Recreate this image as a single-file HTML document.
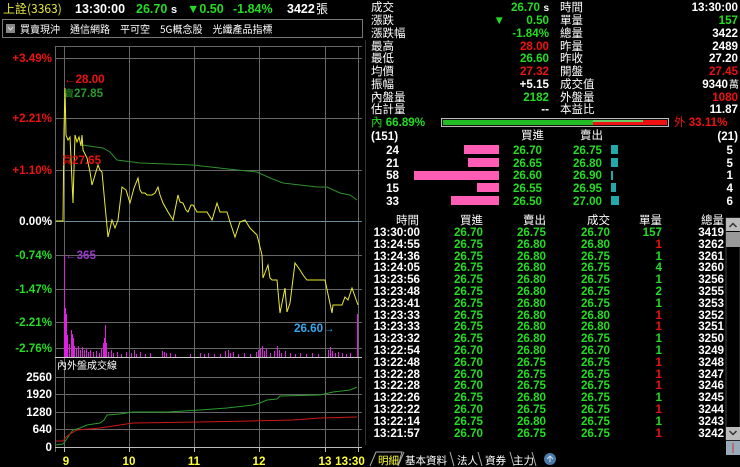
<!DOCTYPE html>
<html><head><meta charset="utf-8"><style>
html,body{margin:0;padding:0;background:#000;width:740px;height:467px;overflow:hidden}
svg{display:block}
text{font-family:"Liberation Sans","Noto Sans CJK TC",sans-serif;font-size:11.6px;font-weight:bold}
.c{font-family:"Noto Sans CJK TC","WenQuanYi Zen Hei",sans-serif;font-weight:normal;font-size:11.5px}
.w{fill:#fff}.g{fill:#22dd22}.r{fill:#ee1111}.y{fill:#ffff33}
</style></head><body>
<svg width="740" height="467" viewBox="0 0 740 467" xmlns="http://www.w3.org/2000/svg">
<text x="3" y="13" class="c" style="fill:#e8e840;font-size:12px">上詮(3363)</text>
<text x="75" y="13" class="w" style="font-size:12.5px">13:30:00</text>
<text x="136" y="13" class="g" style="font-size:12.5px">26.70</text><text x="171" y="13" class="w" style="font-size:11px">s</text>
<text x="187" y="13" class="g" style="font-size:12.5px">▼0.50</text>
<text x="233" y="13" class="g" style="font-size:12.5px">-1.84%</text>
<text x="287" y="13" class="w" style="font-size:12.5px">3422</text><text x="316" y="13" class="c w" style="font-size:12px">張</text>
<rect x="2.5" y="19.5" width="360" height="18" fill="none" stroke="#777"/>
<rect x="6" y="24" width="9" height="9" fill="#888"/><path d="M8 27 L10.5 30 L13 27" stroke="#ddd" fill="none"/>
<text x="20" y="33" class="c w" style="font-size:10px">買賣現沖　通信網路　平可空　5G概念股　光纖產品指標</text>

<g stroke="#666" stroke-width="1" fill="none">
<path d="M55.5 47 V452 M55 46.5 H362"/>
<path d="M64.5 47V452 M129.5 47V452 M194.5 47V452 M259.5 47V452 M325.5 47V452 M358.5 47V452"/>
<path d="M55 58.5H362 M55 118.5H362 M55 170.5H362 M55 255.5H362 M55 289.5H362 M55 322.5H362 M55 348.5H362"/>
<path d="M55 377.5H362 M55 394.5H362 M55 412.5H362 M55 429.5H362"/>
</g>
<path d="M55 221.5H362" stroke="#6a8a9a"/>
<path d="M55 357.5H362" stroke="#ccc"/>
<path d="M55 447.5H362" stroke="#bbb"/>
<g stroke="#bbb"><path d="M64.5 447V452 M129.5 447V452 M194.5 447V452 M259.5 447V452 M325.5 447V452 M358.5 447V452"/></g>
<g text-anchor="end">
<text x="52" y="62" class="r">+3.49%</text>
<text x="52" y="122" class="r">+2.21%</text>
<text x="52" y="174" class="r">+1.10%</text>
<text x="52" y="225" class="w">0.00%</text>
<text x="52" y="259" class="g">-0.74%</text>
<text x="52" y="293" class="g">-1.47%</text>
<text x="52" y="326" class="g">-2.21%</text>
<text x="52" y="352" class="g">-2.76%</text>
<text x="52" y="381" class="w">2560</text>
<text x="52" y="398" class="w">1920</text>
<text x="52" y="416" class="w">1280</text>
<text x="52" y="433" class="w">640</text>
<text x="52" y="451" class="w">0</text>
</g>
<g class="y" text-anchor="middle"><text x="66" y="465" class="y">9</text><text x="129" y="465" class="y">10</text><text x="194" y="465" class="y">11</text><text x="259" y="465" class="y">12</text><text x="325" y="465" class="y">13</text><text x="350" y="465" class="y">13:30</text></g>
<text x="57" y="369" class="c w" style="font-size:10px">內外盤成交線</text>

<path stroke="#e020e0" stroke-width="1" d="M64.5 357V255 M65.5 357V308 M66.5 357V314 M67.5 357V335 M69.5 357V344 M71.5 357V330 M72.5 357V334 M73.5 357V338 M74.5 357V346 M76.5 357V348 M78.5 357V346 M80.5 357V350 M82.5 357V347 M84.5 357V350 M86.5 357V349 M88.5 357V352 M90.5 357V350 M93.5 357V352 M96.5 357V351 M99.5 357V353 M101.5 357V349 M103.5 357V343 M104.5 357V338 M105.5 357V325 M106.5 357V343 M108.5 357V352 M111.5 357V350 M113.5 357V353 M117.5 357V352 M121.5 357V354 M126.5 357V352 M131.5 357V353 M134.5 357V350 M136.5 357V354 M140.5 357V352 M145.5 357V354 M150.5 357V353 M162.5 357V351 M164.5 357V352 M166.5 357V353 M170.5 357V353 M175.5 357V354 M190.5 357V354 M200.5 357V353 M204.5 357V354 M208.5 357V353 M214.5 357V354 M220.5 357V354 M225.5 357V351 M228.5 357V350 M230.5 357V353 M233.5 357V352 M238.5 357V354 M244.5 357V353 M250.5 357V354 M256.5 357V352 M258.5 357V350 M260.5 357V348 M262.5 357V346 M264.5 357V351 M266.5 357V349 M270.5 357V353 M274.5 357V351 M277.5 357V346 M279.5 357V350 M281.5 357V353 M285.5 357V351 M290.5 357V353 M295.5 357V354 M300.5 357V353 M306.5 357V354 M312.5 357V353 M318.5 357V354 M328.5 357V350 M330.5 357V347 M332.5 357V351 M335.5 357V353 M338.5 357V352 M342.5 357V353 M346.5 357V354 M350.5 357V353 M357.5 357V314"/>

<polyline fill="none" stroke="#2f8f2f" stroke-width="1" points="82,145 103,148 110,152 117,160 140,163 193,165 237,170 257,172 270,178 283,183 300,185 317,187 327,187 340,193 350,195 357,200"/>
<polyline fill="none" stroke="#ecec30" stroke-width="1" points="56,221 63,221 64,130 65,88 66,135 68,140 70,137 73,203 75,135 77,142 79,137 81,146 82,135 83,150 87,158 90,172 92,185 95,175 98,165 100,170 102,172 105,205 108,237 112,220 115,228 118,220 122,187 126,190 130,203 134,188 138,178 140,190 142,193 145,193 147,195 152,195 155,193 158,187 160,195 163,203 168,212 173,220 178,195 180,202 183,203 186,210 188,212 191,205 193,205 197,212 207,212 212,220 217,203 220,212 227,212 230,222 232,228 235,237 240,222 245,220 250,228 257,235 262,255 263,278 268,265 270,278 272,280 277,280 280,313 285,288 287,312 290,303 295,263 300,270 303,275 307,280 325,280 332,313 333,305 342,305 345,297 348,300 352,288 358,305"/>
<polyline fill="none" stroke="#2a9a2a" points="56,445 63,444 66,440 70,434 73,430 80,428 87,425 100,423 104,420 107,415 120,414 133,412 167,412 200,410 227,408 253,405 260,403 267,400 277,399 280,396 320,395 333,392 350,390 357,387"/>
<polyline fill="none" stroke="#d01818" points="56,441 63,441 66,437 70,434 77,430 100,428 120,425 133,423 200,422 250,421 293,420 320,418 357,417"/>

<text x="64" y="83" class="r">←28.00</text>
<text x="64" y="97" style="fill:#2a9a2a"><tspan class="c" style="font-size:10px">賣</tspan>27.85</text>
<text x="62" y="164" class="r"><tspan class="c" style="font-size:10px">買</tspan>27.65</text>
<text x="65" y="259" style="fill:#9a3acc">←365</text>
<text x="294" y="332" style="fill:#33aaee">26.60→</text>

<g class="c w">
<text x="371" y="11" class="c w">成交</text><text x="371" y="24" class="c w">漲跌</text><text x="371" y="37" class="c w">漲跌幅</text><text x="371" y="50" class="c w">最高</text><text x="371" y="62" class="c w">最低</text><text x="371" y="75" class="c w">均價</text><text x="371" y="88" class="c w">振幅</text><text x="371" y="101" class="c w">內盤量</text><text x="371" y="113" class="c w">估計量</text>
<text x="560" y="11" class="c w">時間</text><text x="560" y="24" class="c w">單量</text><text x="560" y="37" class="c w">總量</text><text x="560" y="50" class="c w">昨量</text><text x="560" y="62" class="c w">昨收</text><text x="560" y="75" class="c w">開盤</text><text x="560" y="88" class="c w">成交值</text><text x="560" y="101" class="c w">外盤量</text><text x="560" y="113" class="c w">本益比</text>
</g>
<g text-anchor="end">
<text x="540" y="11" class="g">26.70</text><text x="549" y="11" class="w" style="font-size:10px">s</text>
<text x="549" y="24" class="g">0.50</text><text x="505" y="24" class="g">▼</text>
<text x="549" y="37" class="g">-1.84%</text>
<text x="549" y="50" class="r">28.00</text>
<text x="549" y="62" class="g">26.60</text>
<text x="549" y="75" class="r">27.32</text>
<text x="549" y="88" class="w">+5.15</text>
<text x="549" y="101" class="g">2182</text>
<text x="549" y="113" class="w">--</text>
<text x="738" y="11" class="w">13:30:00</text>
<text x="738" y="24" class="g">157</text>
<text x="738" y="37" class="w">3422</text>
<text x="738" y="50" class="w">2489</text>
<text x="738" y="62" class="w">27.20</text>
<text x="738" y="75" class="r">27.45</text>
<text x="728" y="88" class="w">9340</text><text x="739" y="88" class="c w" style="font-size:10px">萬</text>
<text x="738" y="101" class="r">1080</text>
<text x="738" y="113" class="w">11.87</text>
</g>
<text x="371" y="126" class="g"><tspan class="c">內</tspan> 66.89%</text>
<rect x="441.5" y="118.5" width="227" height="8" fill="#111" stroke="#bbb"/>
<rect x="443" y="120" width="150" height="5" fill="#22bb22"/>
<rect x="593" y="120" width="74" height="5" fill="#ee1111"/>
<rect x="593" y="120" width="50" height="2" fill="#66cc66"/>
<text x="674" y="126" class="r"><tspan class="c">外</tspan> 33.11%</text>

<text x="371" y="140" class="w">(151)</text>
<text x="738" y="140" class="w" text-anchor="end">(21)</text>
<text x="521" y="139" class="c w">買進</text><text x="580" y="139" class="c w">賣出</text>
<g fill="#ff5cb5">
<rect x="464" y="145" width="35" height="9"/><rect x="468" y="158" width="31" height="9"/><rect x="414" y="171" width="85" height="9"/><rect x="477" y="183" width="22" height="9"/><rect x="451" y="196" width="48" height="9"/>
</g>
<g fill="#22aaaa">
<rect x="611" y="145" width="7" height="9"/><rect x="611" y="158" width="7" height="9"/><rect x="611" y="171" width="2" height="9"/><rect x="611" y="183" width="5" height="9"/><rect x="611" y="196" width="8" height="9"/>
</g>
<g text-anchor="end">
<text x="399" y="154" class="w">24</text><text x="399" y="167" class="w">21</text><text x="399" y="179" class="w">58</text><text x="399" y="192" class="w">15</text><text x="399" y="205" class="w">33</text>
<text x="542" y="154" class="g">26.70</text><text x="542" y="167" class="g">26.65</text><text x="542" y="179" class="g">26.60</text><text x="542" y="192" class="g">26.55</text><text x="542" y="205" class="g">26.50</text>
<text x="602" y="154" class="g">26.75</text><text x="602" y="167" class="g">26.80</text><text x="602" y="179" class="g">26.90</text><text x="602" y="192" class="g">26.95</text><text x="602" y="205" class="g">27.00</text>
<text x="733" y="154" class="w">5</text><text x="733" y="167" class="w">5</text><text x="733" y="179" class="w">1</text><text x="733" y="192" class="w">4</text><text x="733" y="205" class="w">6</text>
</g>

<g text-anchor="end">
<text x="419" y="224" class="c w">時間</text><text x="483" y="224" class="c w">買進</text><text x="546" y="224" class="c w">賣出</text><text x="610" y="224" class="c w">成交</text><text x="662" y="224" class="c w">單量</text><text x="724" y="224" class="c w">總量</text>
</g>
<g text-anchor="end">
<text x="420" y="236" class="w">13:30:00</text><text x="483" y="236" class="g">26.70</text><text x="546" y="236" class="g">26.75</text><text x="610" y="236" class="g">26.70</text><text x="662" y="236" class="g">157</text><text x="724" y="236" class="w">3419</text>
<text x="420" y="248" class="w">13:24:55</text><text x="483" y="248" class="g">26.75</text><text x="546" y="248" class="g">26.80</text><text x="610" y="248" class="g">26.80</text><text x="662" y="248" class="r">1</text><text x="724" y="248" class="w">3262</text>
<text x="420" y="260" class="w">13:24:36</text><text x="483" y="260" class="g">26.75</text><text x="546" y="260" class="g">26.80</text><text x="610" y="260" class="g">26.75</text><text x="662" y="260" class="g">1</text><text x="724" y="260" class="w">3261</text>
<text x="420" y="271" class="w">13:24:05</text><text x="483" y="271" class="g">26.75</text><text x="546" y="271" class="g">26.80</text><text x="610" y="271" class="g">26.75</text><text x="662" y="271" class="g">4</text><text x="724" y="271" class="w">3260</text>
<text x="420" y="283" class="w">13:23:56</text><text x="483" y="283" class="g">26.75</text><text x="546" y="283" class="g">26.80</text><text x="610" y="283" class="g">26.75</text><text x="662" y="283" class="g">1</text><text x="724" y="283" class="w">3256</text>
<text x="420" y="295" class="w">13:23:48</text><text x="483" y="295" class="g">26.75</text><text x="546" y="295" class="g">26.80</text><text x="610" y="295" class="g">26.75</text><text x="662" y="295" class="g">2</text><text x="724" y="295" class="w">3255</text>
<text x="420" y="307" class="w">13:23:41</text><text x="483" y="307" class="g">26.75</text><text x="546" y="307" class="g">26.80</text><text x="610" y="307" class="g">26.75</text><text x="662" y="307" class="g">1</text><text x="724" y="307" class="w">3253</text>
<text x="420" y="319" class="w">13:23:33</text><text x="483" y="319" class="g">26.75</text><text x="546" y="319" class="g">26.80</text><text x="610" y="319" class="g">26.80</text><text x="662" y="319" class="r">1</text><text x="724" y="319" class="w">3252</text>
<text x="420" y="330" class="w">13:23:33</text><text x="483" y="330" class="g">26.75</text><text x="546" y="330" class="g">26.80</text><text x="610" y="330" class="g">26.80</text><text x="662" y="330" class="r">1</text><text x="724" y="330" class="w">3251</text>
<text x="420" y="342" class="w">13:23:32</text><text x="483" y="342" class="g">26.75</text><text x="546" y="342" class="g">26.80</text><text x="610" y="342" class="g">26.75</text><text x="662" y="342" class="g">1</text><text x="724" y="342" class="w">3250</text>
<text x="420" y="354" class="w">13:22:54</text><text x="483" y="354" class="g">26.70</text><text x="546" y="354" class="g">26.80</text><text x="610" y="354" class="g">26.70</text><text x="662" y="354" class="g">1</text><text x="724" y="354" class="w">3249</text>
<text x="420" y="366" class="w">13:22:48</text><text x="483" y="366" class="g">26.70</text><text x="546" y="366" class="g">26.75</text><text x="610" y="366" class="g">26.75</text><text x="662" y="366" class="r">1</text><text x="724" y="366" class="w">3248</text>
<text x="420" y="378" class="w">13:22:28</text><text x="483" y="378" class="g">26.70</text><text x="546" y="378" class="g">26.75</text><text x="610" y="378" class="g">26.75</text><text x="662" y="378" class="r">1</text><text x="724" y="378" class="w">3247</text>
<text x="420" y="389" class="w">13:22:28</text><text x="483" y="389" class="g">26.70</text><text x="546" y="389" class="g">26.75</text><text x="610" y="389" class="g">26.75</text><text x="662" y="389" class="r">1</text><text x="724" y="389" class="w">3246</text>
<text x="420" y="401" class="w">13:22:26</text><text x="483" y="401" class="g">26.75</text><text x="546" y="401" class="g">26.80</text><text x="610" y="401" class="g">26.75</text><text x="662" y="401" class="g">1</text><text x="724" y="401" class="w">3245</text>
<text x="420" y="413" class="w">13:22:22</text><text x="483" y="413" class="g">26.70</text><text x="546" y="413" class="g">26.75</text><text x="610" y="413" class="g">26.75</text><text x="662" y="413" class="r">1</text><text x="724" y="413" class="w">3244</text>
<text x="420" y="425" class="w">13:22:14</text><text x="483" y="425" class="g">26.75</text><text x="546" y="425" class="g">26.80</text><text x="610" y="425" class="g">26.75</text><text x="662" y="425" class="g">1</text><text x="724" y="425" class="w">3243</text>
<text x="420" y="437" class="w">13:21:57</text><text x="483" y="437" class="g">26.70</text><text x="546" y="437" class="g">26.75</text><text x="610" y="437" class="g">26.75</text><text x="662" y="437" class="r">1</text><text x="724" y="437" class="w">3242</text>
</g>
<rect x="726" y="218" width="14" height="222" fill="#000" stroke="#444"/>
<rect x="726" y="218" width="14" height="13" fill="#bbb"/><path d="M729.5 227 L733 223.5 L736.5 227" stroke="#333" stroke-width="1.5" fill="none"/>
<rect x="726" y="232" width="14" height="15" fill="#999"/>
<rect x="726" y="427" width="14" height="13" fill="#bbb"/><path d="M729.5 431 L733 434.5 L736.5 431" stroke="#333" stroke-width="1.5" fill="none"/>
<rect x="726" y="441" width="14" height="14" fill="#9ab"/><path d="M733 443V453" stroke="#c33"/>
<path d="M370 466 L376 452 H402 L398 466" fill="none" stroke="#aaa"/>
<text x="378" y="464" class="c" style="fill:#ffff33;font-size:10.5px">明細</text>
<path d="M404 452 L398 466 M450 452 L454 466 M478 452 L482 466 M510 452 L514 466 M532 452 L536 466" stroke="#aaa" fill="none"/>
<text x="405" y="464" class="c w" style="font-size:10.5px">基本資料</text>
<text x="457" y="464" class="c w" style="font-size:10.5px">法人</text>
<text x="485" y="464" class="c w" style="font-size:10.5px">資券</text>
<text x="513" y="464" class="c w" style="font-size:10.5px">主力</text>
<circle cx="550" cy="459" r="6" fill="#4a7aa8"/><path d="M547 459 L550 456 L553 459 M550 456 V462" stroke="#cde" fill="none"/>
<path d="M365.5 40 V445" stroke="#333"/>
</svg>
</body></html>
